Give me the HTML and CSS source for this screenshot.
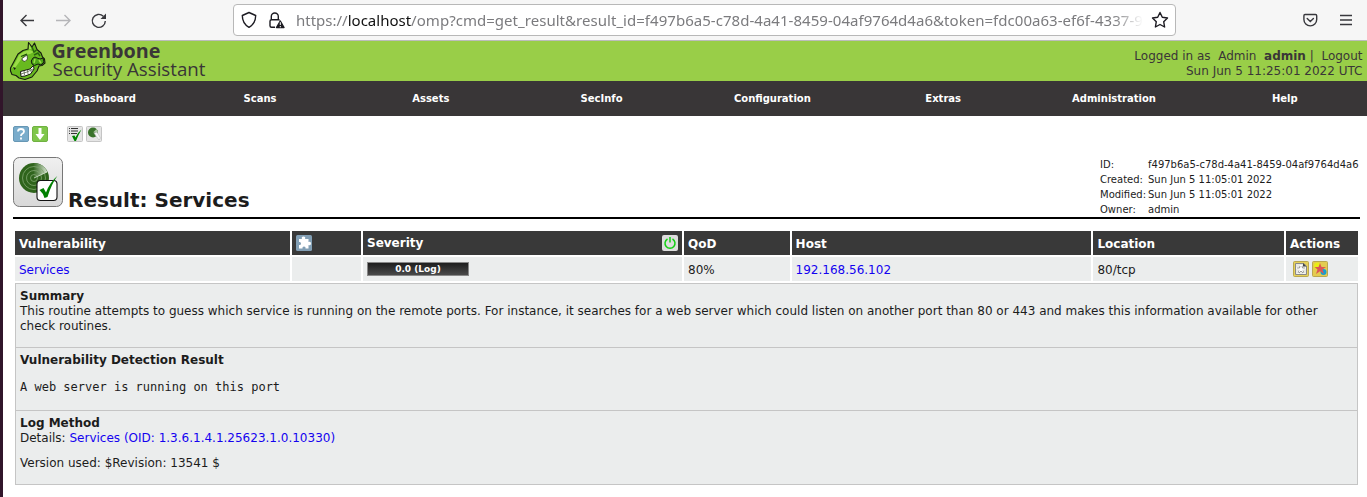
FILE: index.html
```
<!DOCTYPE html>
<html lang="en">
<head>
<meta charset="utf-8">
<title>Greenbone Security Assistant</title>
<link rel="stylesheet" href="styles.css">
</head>
<body>
<div class="browser">
  <svg class="nav-icons" width="110" height="40" viewBox="0 0 110 40" fill="none" stroke-width="1.4">
    <path d="M31 20.500H18M23.500 15L18 20.500L23.500 26" stroke="#38383d"/>
    <path d="M53 20.500H67M61.500 15L67 20.500L61.500 26" stroke="#b5b5b8"/>
    <path d="M102.300 21A6.500 6.500 0 1 1 100.300 16.200" stroke="#38383d"/>
    <path d="M103 13.500V19H97.500Z" fill="#38383d"/>
  </svg>
  <div class="address">
    <svg class="shield" width="58" height="30" viewBox="0 0 58 30" fill="none" stroke="#1c1b22" stroke-width="1.4">
      <path d="M15 7.500L21.700 10.500C21.700 16 19.500 19.800 15 22.300C10.500 19.800 8.300 16 8.300 10.500Z" stroke-linejoin="round"/>
      <path d="M41 22.300H37.500Q36 22.300 36 20.800V16.200Q36 14.700 37.500 14.700H44.500Q45.500 14.700 45.500 15.500M37.300 14.500V11.500A3.500 3.500 0 0 1 44.300 11.500V14.500"/>
      <path d="M46.300 16L50 22.500H42.500Z" fill="#1c1b22" stroke-linejoin="round"/>
      <path d="M46.300 17.200V20M46.300 21V22.300" stroke="#fff" stroke-width="1"/>
    </svg>
    <div class="url"><span class="scheme">https://</span><span class="domain">localhost</span><span class="path">/omp?cmd=get_result&amp;result_id=f497b6a5-c78d-4a41-8459-04af9764d4a6&amp;token=fdc00a63-ef6f-4337-95</span></div>
    <svg width="32" height="30" viewBox="0 0 32 30" fill="none" stroke="#1c1b22" stroke-width="1.4" stroke-linejoin="round">
      <path d="M17 7.500L19.300 12.200L24.500 13L20.700 16.700L21.600 22L17 19.500L12.400 22L13.300 16.700L9.500 13L14.700 12.200Z"/>
    </svg>
  </div>
  <svg class="tools" width="70" height="40" viewBox="0 0 70 40" fill="none" stroke="#38383d" stroke-width="1.4">
    <path d="M8 14.500H18.500Q19.700 14.500 19.700 15.700V19.500A6.400 6.400 0 0 1 6.900 19.500V15.700Q6.900 14.500 8 14.500ZM10.200 18.500L13.300 21.500L16.400 18.500" stroke-linecap="round"/>
    <path d="M43 15.500H55M43 20H55M43 24.500H55"/>
  </svg>
</div>
<div class="page">
  <header class="banner">
    <svg class="logo" width="220" height="40" viewBox="0 0 220 40">
      <path d="M7.500 27L11 20.500L15 13L20 9.500L25 8L25.500 1.500L29 6L31.500 2L34 8.500L38 12L39.500 16L41.500 18L42 22L39 24.500L36 25L34 30L29 36L22 38.500L16 37L13 34.500L9 33.500L7.500 30Z" fill="#68b91f" stroke="#151a10" stroke-width="1.100" stroke-linejoin="round"/>
      <path d="M9 27L13 20L16 14L21 10.500L27 9L31 11L27 13L21 14L17 20L12 27Z" fill="#9bdc48"/>
      <path d="M26 3L28.500 8L26 8.500Z" fill="#a4df55"/>
      <path d="M29 6L31 11L33.500 9M31 14L35 12L37 15" fill="none" stroke="#28630f" stroke-width="1.500"/>
      <path d="M30 17Q32 15 34 17L37 18L40 17L41 21L38 24L35 23Q31 26 29 23Q27 20 30 17Z" fill="#4ca419" stroke="#151a10"/>
      <path d="M32 18L31 22M36 19L38 22" stroke="#9bdc48" stroke-width="1.500"/>
      <path d="M17.500 30.500L23 29L27 28L30.500 24.500L31 28L27.500 33L22 35L18 35.500Z" fill="#fff" stroke="#151a10"/>
      <path d="M18 33L24 31L30 28M21 30L21.500 34M24.500 29L25 33M28 28V31" stroke="#49543b" fill="none" stroke-width=".7"/>
      <path d="M19 17.500L24 14L24.500 18L22 20.500L19.500 19.500Z" fill="#fff" stroke="#222" stroke-width=".7"/>
      <path d="M18 15.500L24 13" stroke="#174509" stroke-width="1.300"/>
      <path d="M10 26L13 27L11.500 29Z" fill="#151a10"/>
      <text class="brand" x="48.500" y="17" textLength="109" lengthAdjust="spacingAndGlyphs">Greenbone</text>
      <text class="product" x="49.500" y="35" textLength="153" lengthAdjust="spacingAndGlyphs">Security Assistant</text>
    </svg>
    <div class="session"><div>Logged in as&nbsp; Admin&nbsp; <b>admin</b> |&nbsp; Logout</div><div>Sun Jun 5 11:25:01 2022 UTC</div></div>
  </header>
  <nav class="menu"><span>Dashboard</span><span>Scans</span><span>Assets</span><span>SecInfo</span><span>Configuration</span><span>Extras</span><span>Administration</span><span>Help</span></nav>
  <main>
    <div class="toolbar">
      <svg width="16" height="16" viewBox="0 0 16 16"><rect x=".5" y=".5" width="15" height="15" rx="1.500" fill="#7aaccb" stroke="#6797b4"/><path d="M5 5.500Q5 3 8 3Q11 3 11 5.500Q11 7 9 8Q8 8.500 8 10M8 11.500V13.500" fill="none" stroke="#fff" stroke-width="1.800"/></svg>
      <svg width="16" height="16" viewBox="0 0 16 16"><rect x=".5" y=".5" width="15" height="15" rx="1.500" fill="#7fc64b" stroke="#70b142"/><path d="M6.500 2H9.500V8H12.500L8 14L3.500 8H6.500Z" fill="#fff"/></svg>
      <svg class="after-gap" width="16" height="16" viewBox="0 0 16 16"><rect x=".5" y=".5" width="15" height="15" rx="1" fill="#e5e5e5" stroke="#c5c5c5"/><path d="M2 2.500H3M4 2.500H11M2 5H3M4 5H11M2 7.500H3M4 7.500H10" stroke="#333"/><path d="M5 10L7.500 9.500L8.500 11.500Q10 7 14.500 3.500Q11.500 8.500 9 15H7.500Z" fill="#008500"/></svg>
      <svg width="16" height="16" viewBox="0 0 16 16"><rect x=".5" y=".5" width="15" height="15" rx="1" fill="#e5e5e5" stroke="#c5c5c5"/><circle cx="7" cy="6.500" r="5" fill="#39722a"/><path d="M7 6.500L10.500 3L12 6Z" fill="#a9c59f"/><path d="M8 7L11 6L14.500 12L13 14L10 10Z" fill="#f5f5f5" stroke="#bbb" stroke-width=".6"/></svg>
    </div>
    <div class="heading">
      <svg width="50" height="50" viewBox="0 0 50 50">
        <defs>
          <linearGradient id="tile" x2="0" y2="1"><stop stop-color="#f0f0f0"/><stop offset="1" stop-color="#d8d8d8"/></linearGradient>
          <linearGradient id="sweep"><stop offset="0" stop-color="#2f641c"/><stop offset="1" stop-color="#dbe7d5"/></linearGradient>
        </defs>
        <rect x=".5" y=".5" width="49" height="49" rx="6" fill="url(#tile)" stroke="#777"/>
        <circle cx="21" cy="21" r="15" fill="#2f641c"/>
        <path d="M21 21L20 6A15 15 0 0 1 34.500 15Z" fill="url(#sweep)"/>
        <g fill="none" stroke="#82a771" stroke-width=".8"><circle cx="21" cy="21" r="11.500"/><circle cx="21" cy="21" r="7.500"/><circle cx="21" cy="21" r="3.500"/><path d="M21 21L34 15" stroke="#d7e5d0"/></g>
        <rect x="24" y="23.500" width="20" height="20" rx="3.500" fill="#fff" stroke="#111" stroke-width="1.100"/>
        <path d="M26.500 33L30.500 31L33 35.500Q37 25 44.300 19Q38.500 27 34.500 40L31.500 41Q30 36 26.500 33Z" fill="#008000"/>
      </svg>
      <h1>Result: Services</h1>
      <dl class="meta"><dt>ID:</dt><dd>f497b6a5-c78d-4a41-8459-04af9764d4a6</dd><dt>Created:</dt><dd>Sun Jun 5 11:05:01 2022</dd><dt>Modified:</dt><dd>Sun Jun 5 11:05:01 2022</dd><dt>Owner:</dt><dd>admin</dd></dl>
    </div>
    <div class="results">
      <div class="th"><span>Vulnerability</span></div>
      <div class="th"><svg width="16" height="16" viewBox="0 0 16 16"><rect width="16" height="16" rx="1.500" fill="#829fb5"/><path d="M3 4H6Q5 1.500 7.500 1.500Q10 1.500 9 4H12.500V7Q15 6 15 8.500Q15 11 12.500 10V13.500H9.500Q10 11.500 8 11.500Q6 11.500 6.500 13.500H3V10Q5 10.500 5 8.500Q5 6.500 3 7Z" fill="#fff"/></svg></div>
      <div class="th severity">Severity<svg width="16" height="16" viewBox="0 0 16 16"><rect width="16" height="16" rx="2" fill="#dedede"/><path d="M5.500 4A5 5 0 1 0 10.500 4M8 2V7.500" fill="none" stroke="#12d012" stroke-width="1.500"/></svg></div>
      <div class="th"><span>QoD</span></div><div class="th"><span>Host</span></div><div class="th"><span>Location</span></div><div class="th"><span>Actions</span></div>
      <div class="td"><a>Services</a></div><div class="td"></div>
      <div class="td"><div class="level">0.0 (Log)</div></div>
      <div class="td"><span>80%</span></div><div class="td"><a>192.168.56.102</a></div><div class="td"><span>80/tcp</span></div>
      <div class="td actions">
        <svg width="16" height="16" viewBox="0 0 16 16"><rect x=".5" y=".5" width="15" height="15" rx="1" fill="#e6d05a" stroke="#b9a750"/><path d="M2.500 2.500H10.500L13.500 5V13.500H2.500Z" fill="#e9e9e2" stroke="#888"/><path d="M10 2V5.500H13.500Z" fill="#444"/><path d="M8 4V8M3.500 7L8 8L12.500 7M8 8L4.500 12.500M8 8L11.500 12.500" fill="none" stroke="#fff" stroke-width="2"/><path d="M7 5L6.500 7H4M9 5L9.500 7H12M5 12L6 9.500M8 10L6 12M8 10L10 12M11 12L10 9.500" fill="none" stroke="#777" stroke-width=".7"/></svg>
        <svg width="16" height="16" viewBox="0 0 16 16"><rect x=".5" y=".5" width="15" height="15" rx="1" fill="#e4cb50" stroke="#b9a750"/><circle cx="5.500" cy="5" r="3.500" fill="#e9ee16"/><circle cx="11.500" cy="11" r="3" fill="#159fd1"/><path d="M8 2L9.500 6H14L10.500 8.500L12 13L8 10.300L4 13L5.500 8.500L2.500 6H6.500Z" fill="#dc5755"/></svg>
      </div>
    </div>
    <div class="details">
      <section class="summary"><h2>Summary</h2><p>This routine attempts to guess which service is running on the remote ports. For instance, it searches for a web server which could listen on another port than 80 or 443 and makes this information available for other<br>check routines.</p></section>
      <section class="detection"><h2>Vulnerability Detection Result</h2><pre>A web server is running on this port</pre></section>
      <section class="method"><h2>Log Method</h2><p>Details: <a>Services (OID: 1.3.6.1.4.1.25623.1.0.10330)</a></p><p class="version">Version used: $Revision: 13541 $</p></section>
    </div>
  </main>
</div>
</body>
</html>
```
FILE: styles.css
```
* { box-sizing: border-box; }
body { margin: 0; width: 1367px; height: 497px; overflow: hidden; background: #fff; border-left: 3px solid #31152a; color: #1c1c1c; font: 12px/15px "DejaVu Sans", sans-serif; }
svg { display: block; flex: none; }
h1, h2, p, pre, dl, dd { margin: 0; }
a { color: #1402f0; }
.browser { display: flex; height: 41px; background: #f6f6f6; border-bottom: 1px solid #bcbcbc; }
.address { display: flex; align-items: center; width: 943px; height: 32px; margin: 4px 0 0 120px; background: #fff; border: 1px solid #b8b8b8; border-radius: 4px; }
.url { flex: 1; display: flex; margin-left: 4px; overflow: hidden; white-space: nowrap; font: 15px/28px "Noto Sans", sans-serif; color: #7b7b7e; -webkit-mask-image: linear-gradient(90deg, #000 calc(100% - 30px), transparent); mask-image: linear-gradient(90deg, #000 calc(100% - 30px), transparent); }
.domain { color: #111; }
.path { letter-spacing: .035px; }
.tools { margin-left: 121px; }
.banner { display: flex; justify-content: space-between; height: 40px; background: #99ce48; color: #3a3637; }
.brand { font: bold 20px "Open Sans", sans-serif; fill: #393637; }
.product { font: 18px "Open Sans", sans-serif; fill: #393637; }
.session { padding: 8px 4.500px 0 0; text-align: right; }
.menu { display: flex; height: 35px; padding-left: 33px; overflow: hidden; background: #393637; color: #fff; font: bold 10px/35px "DejaVu Sans", sans-serif; text-align: center; }
.menu span { flex: 0 0 170.8px; }
.menu span:first-child { flex-basis: 138.6px; }
main { padding: 10px 7px 0 10px; }
.toolbar { display: flex; gap: 3px; height: 31px; }
.after-gap { margin-left: 16px; }
.heading { display: flex; height: 62px; border-bottom: 2px solid #000; }
h1 { padding: 31px 0 0 5px; font-size: 20px; line-height: 24px; }
.meta { display: grid; grid-template-columns: 48px 212px; grid-auto-rows: 15px; margin-left: auto; font-size: 10px; line-height: 15px; white-space: nowrap; }
.results { display: grid; grid-template-columns: 275px 69px 319px 105.600px 299.800px 190.600px 72px; grid-auto-rows: 24px; gap: 2px; margin: 12px 2px 2px; }
.th, .td { display: flex; align-items: center; padding: 0 4px; }
.th > span, .td > span, .td > a { padding-top: 2px; }
.th { background: #393939; color: #fff; font-weight: bold; }
.td { background: #ebeded; }
.severity { justify-content: space-between; }
.level { width: 102px; height: 14px; border: 1px solid #888; background: linear-gradient(#1e1e1e, #4a4a4a); color: #fff; font: bold 9px/12px "DejaVu Sans", sans-serif; text-align: center; }
.actions { gap: 3px; padding-left: 7px; }
.details { margin: 0 2px; background: #ebeded; border: 1px solid #c5c5c5; }
section { padding: 5px 4px 0; }
section + section { border-top: 1px solid #c5c5c5; }
h2 { font-size: 12px; line-height: 15px; }
.summary { height: 63px; }
.detection { height: 63px; }
.method { height: 74px; }
pre { margin-top: 12px; font: 12px/15px "DejaVu Sans Mono", monospace; }
.version { margin-top: 10px; }
```
